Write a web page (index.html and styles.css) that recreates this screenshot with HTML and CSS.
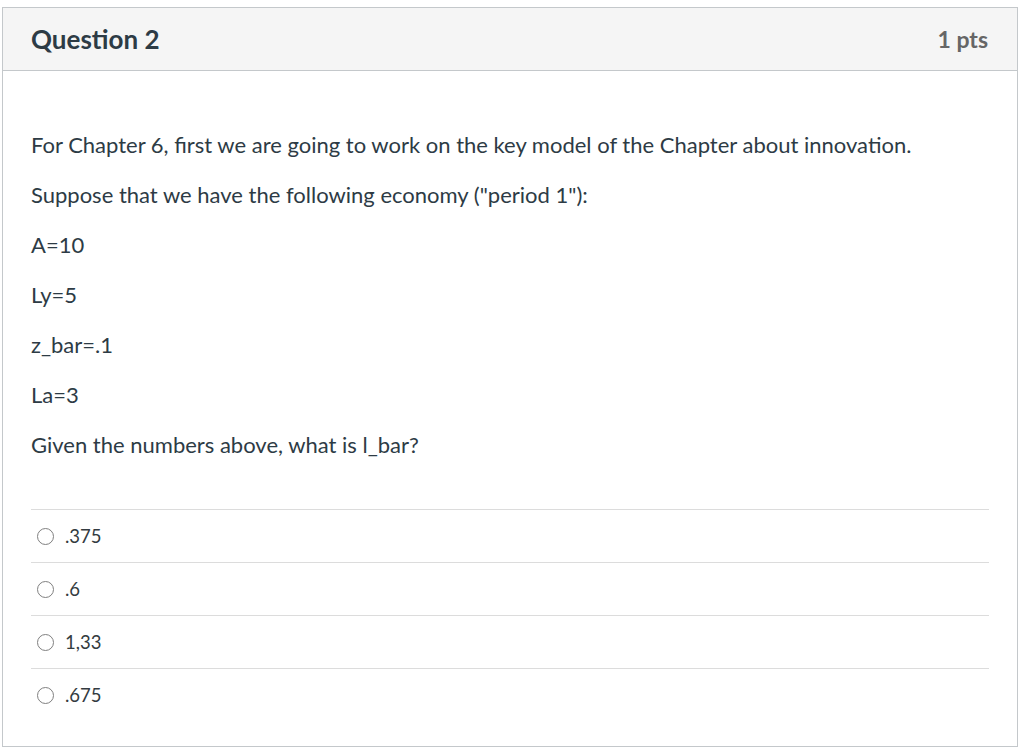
FILE: index.html
```html
<!DOCTYPE html>
<html lang="en">
<head>
<meta charset="utf-8">
<title>Question 2</title>
<link rel="stylesheet" href="styles.css">
</head>
<body>
<div class="question">
  <div class="q-header">
    <h2 class="q-title">Question 2</h2>
    <div class="q-points">1 pts</div>
  </div>
  <div class="q-body">
    <div class="q-text">
      <p>For Chapter 6, first we are going to work on the key model of the Chapter about innovation.</p>
      <p>Suppose that we have the following economy ("period 1"):</p>
      <p>A=10</p>
      <p>Ly=5</p>
      <p>z_bar=.1</p>
      <p>La=3</p>
      <p>Given the numbers above, what is l_bar?</p>
    </div>
    <div class="answers">
      <label class="answer"><span class="radio"></span><span class="answer-text">.375</span></label>
      <label class="answer"><span class="radio"></span><span class="answer-text">.6</span></label>
      <label class="answer"><span class="radio"></span><span class="answer-text">1,33</span></label>
      <label class="answer"><span class="radio"></span><span class="answer-text">.675</span></label>
    </div>
  </div>
</div>
</body>
</html>
```
FILE: styles.css
```css
html, body {
  margin: 0;
  padding: 0;
  background: #ffffff;
}
body {
  font-family: Lato, "Open Sans", sans-serif;
  color: #2d3b45;
  padding: 7px 6px 0 2px;
}
.question {
  border: 1px solid #c4c8cb;
  display: flex;
  flex-direction: column;
  height: 740px;
  box-sizing: border-box;
}
.q-header {
  background: #f5f5f5;
  border-bottom: 1px solid #c4c8cb;
  height: 63px;
  box-sizing: border-box;
  display: flex;
  align-items: center;
  justify-content: space-between;
  padding: 0 29px 1px 28px;
}
.q-title {
  margin: 0;
  font-size: 26px;
  font-weight: 700;
  color: #2d3b45;
}
.q-points {
  font-size: 23px;
  font-weight: 700;
  color: #666666;
}
.q-body {
  padding: 59px 28px 0 28px;
}
.q-text p {
  margin: 0 0 20px 0;
  font-size: 22px;
  line-height: 30px;
}
.answers {
  margin-top: 49px;
}
.answer {
  display: flex;
  align-items: center;
  gap: 11px;
  height: 53px;
  border-top: 1px solid #dcdcdc;
  box-sizing: border-box;
  padding-left: 6px;
  font-size: 18.5px;
  color: #333b40;
}
.radio {
  width: 17px;
  height: 17px;
  border: 1px solid #808080;
  border-radius: 50%;
  box-sizing: border-box;
  background: #fff;
}
```
